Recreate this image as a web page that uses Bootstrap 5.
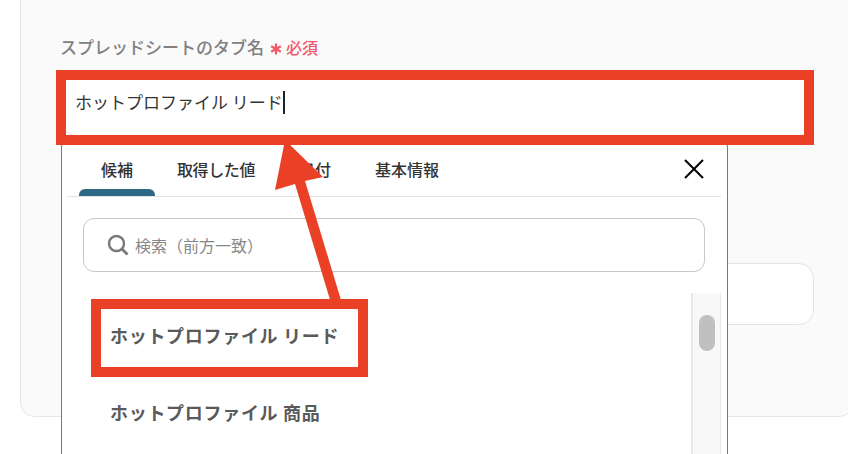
<!DOCTYPE html>
<html lang="ja">
<head>
<meta charset="utf-8">
<title>スプレッドシートのタブ名</title>
<link href="https://cdn.jsdelivr.net/npm/bootstrap@5.3.0/dist/css/bootstrap.min.css" rel="stylesheet">
<style>
html,body{height:100%;overflow:hidden;background:#fff;font-family:"Noto Sans CJK JP","Noto Sans",sans-serif}
.stage{position:relative;width:848px;height:454px;overflow:hidden}
.panel-bg{margin-left:20px;width:834px;height:417px;background:#fafafa;border:1px solid #e6e7ea;border-top:0;border-radius:0 0 15px 15px;padding:28px 0 0 40px}
.fld-label{font-size:17px;line-height:24px;font-weight:500;color:#808080;height:46px;gap:6px;padding-bottom:8px;margin-left:-1px}
.req-star{color:#f0586a;font-size:16px;font-weight:500;line-height:24px}
.field-box{width:753px;height:62px;background:#fff;border:1px solid #e2e4e8;border-radius:15px;font-size:17px;padding:14px 0 0 13px;color:#333}
.field-main{line-height:25px}
.field-gap{margin-top:127px}
.caret-bar{display:inline-block;width:2px;height:23px;background:#1a2630;vertical-align:-5px}
.popup{position:absolute;left:61px;top:137px;width:667px;height:340px;background:#fff;border:1px solid #777;border-radius:10px;padding:0 6px 0 5px}
.tab-row{height:59px;border-bottom:1px solid #e2e2e2;padding:8px 0 0 12px;position:relative}
.tab-item{position:relative;padding:0 22px;font-size:16px;font-weight:500;line-height:46px;height:50px;color:#333}
.tab-tight{letter-spacing:-.4px}
.tab-on::after{content:"";position:absolute;left:0;right:0;bottom:0;height:7px;background:#2f6a84;border-radius:6px 6px 0 0}
.close-x{position:absolute;right:17px;top:21px;display:block}
.search-box{margin:21px 16px 0 16px;height:54px;border:1px solid #c8c8c8;border-radius:11px;padding:0 0 1px 23px;gap:6px;font-size:16px;color:#888}
.list-wrap{position:relative;height:200px;padding:0 0 0 43px}
.opt-row{font-size:18px;font-weight:700;color:#5a5a5a;letter-spacing:.7px;line-height:26px}
.opt-first{padding-top:50px}
.opt-next{padding-top:51px}
.scroll-track{position:absolute;right:0;top:21px;width:30px;height:200px;background:#f8f8f8;border-left:2px solid #e8e8e8;border-right:1px solid #e8e8e8}
.scroll-thumb{position:absolute;left:6px;top:22px;width:16px;height:36px;background:#c0c0c0;border-radius:8px}
.mark-box{position:absolute;border:10px solid #ea4126}
.mark-a{left:56px;top:70px;width:758px;height:75px}
.mark-b{left:91px;top:299px;width:277px;height:78px}
.mark-arrow{position:absolute;left:0;top:0}
</style>
</head>
<body>
<div class="stage">
  <div class="panel-bg">
    <div class="fld-label d-flex align-items-center">
      <span>スプレッドシートのタブ名</span>
      <span class="req-star d-flex align-items-center gap-1">
        <svg width="12" height="12" viewBox="0 0 12 12" class="mt-1"><path d="M6 .5V11.5M1.2 3.2 10.8 8.8M10.8 3.2 1.2 8.8" stroke="#f0586a" stroke-width="2.2" fill="none"/></svg>
        <span>必須</span>
      </span>
    </div>
    <div class="field-box field-main">ホットプロファイル リード<span class="caret-bar"></span></div>
    <div class="field-box field-gap"></div>
  </div>

  <div class="popup">
    <div class="tab-row d-flex">
      <div class="tab-item tab-on">候補</div>
      <div class="tab-item tab-tight">取得した値</div>
      <div class="tab-item">日付</div>
      <div class="tab-item">基本情報</div>
      <svg class="close-x" width="20" height="20" viewBox="0 0 20 20"><path d="M1 1 19 19M19 1 1 19" stroke="#000" stroke-width="2" fill="none"/></svg>
    </div>
    <div class="search-box d-flex align-items-center">
      <svg width="22" height="22" viewBox="0 0 22 22"><circle cx="9.5" cy="9.5" r="7.5" stroke="#777" stroke-width="2.4" fill="none"/><path d="M15 15 20.5 20.5" stroke="#777" stroke-width="2.6" fill="none"/></svg>
      <span>検索（前方一致）</span>
    </div>
    <div class="list-wrap">
      <div class="opt-row opt-first">ホットプロファイル リード</div>
      <div class="opt-row opt-next">ホットプロファイル 商品</div>
      <div class="scroll-track"><div class="scroll-thumb"></div></div>
    </div>
  </div>

  <div class="mark-box mark-a"></div>
  <div class="mark-box mark-b"></div>
  <svg class="mark-arrow" width="848" height="454" viewBox="0 0 848 454"><polygon points="285,140 323,177 305,181 341,300 331,303 295,184 275,190" fill="#ea4126"/></svg>
</div>
<script src="https://cdn.jsdelivr.net/npm/bootstrap@5.3.0/dist/js/bootstrap.bundle.min.js"></script>
</body>
</html>
